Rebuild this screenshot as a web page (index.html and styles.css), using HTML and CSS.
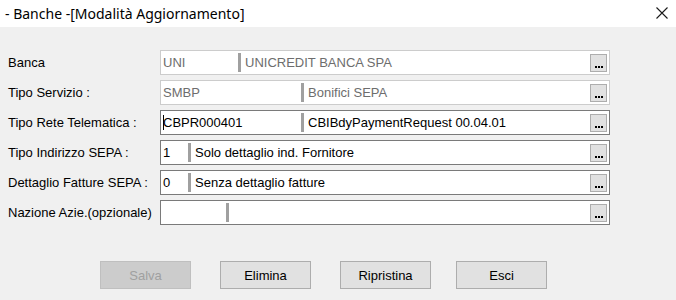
FILE: index.html
```html
<!DOCTYPE html>
<html lang="it">
<head>
    <meta charset="UTF-8">
    <title>Banche</title>
    <link rel="stylesheet" href="styles.css">
</head>
<body>
    <div class="titlebar">
        <span class="title">- Banche -[Modalità Aggiornamento]</span>
        <svg class="close" width="12" height="12" viewBox="0 0 12 12">
            <path d="M0.5 0.5 L11.5 11.5 M11.5 0.5 L0.5 11.5" stroke="#1a1a1a" stroke-width="1.1" fill="none"/>
        </svg>
    </div>

    <div class="form">
        <div class="row">
            <label>Banca</label>
            <div class="field disabled">
                <span class="code w-mid">UNI</span>
                <span class="sep"></span>
                <span class="desc">UNICREDIT BANCA SPA</span>
                <span class="dots"><i></i><i></i><i></i></span>
            </div>
        </div>
        <div class="row">
            <label>Tipo Servizio :</label>
            <div class="field disabled">
                <span class="code w-long">SMBP</span>
                <span class="sep"></span>
                <span class="desc">Bonifici SEPA</span>
                <span class="dots"><i></i><i></i><i></i></span>
            </div>
        </div>
        <div class="row">
            <label>Tipo Rete Telematica :</label>
            <div class="field">
                <span class="code w-long"><span class="caret"></span>CBPR000401</span>
                <span class="sep"></span>
                <span class="desc">CBIBdyPaymentRequest 00.04.01</span>
                <span class="dots"><i></i><i></i><i></i></span>
            </div>
        </div>
        <div class="row">
            <label>Tipo Indirizzo SEPA :</label>
            <div class="field">
                <span class="code w-short">1</span>
                <span class="sep"></span>
                <span class="desc">Solo dettaglio ind. Fornitore</span>
                <span class="dots"><i></i><i></i><i></i></span>
            </div>
        </div>
        <div class="row">
            <label>Dettaglio Fatture SEPA :</label>
            <div class="field">
                <span class="code w-short">0</span>
                <span class="sep"></span>
                <span class="desc">Senza dettaglio fatture</span>
                <span class="dots"><i></i><i></i><i></i></span>
            </div>
        </div>
        <div class="row">
            <label>Nazione Azie.(opzionale)</label>
            <div class="field">
                <span class="code w-nat"></span>
                <span class="sep"></span>
                <span class="desc"></span>
                <span class="dots"><i></i><i></i><i></i></span>
            </div>
        </div>
    </div>

    <div class="buttons">
        <button class="btn" disabled>Salva</button>
        <button class="btn">Elimina</button>
        <button class="btn">Ripristina</button>
        <button class="btn btn-last">Esci</button>
    </div>
</body>
</html>
```

FILE: styles.css
```css
body {
    margin: 0;
    padding: 0;
    background-color: #f0f0f0;
    font-family: "Liberation Sans", Arial, sans-serif;
    font-size: 13px;
    color: #000;
}
.titlebar {
    height: 27px;
    background: #fff;
    display: flex;
    align-items: center;
    justify-content: space-between;
    padding: 0 8px 0 5px;
}
.title {
    font-family: "Noto Sans", sans-serif;
    font-size: 14px;
    color: #000;
}
.close {
    margin-top: -1px;
}
.form {
    padding: 23px 0 0 8px;
    display: flex;
    flex-direction: column;
    gap: 5px;
}
.row {
    display: flex;
    align-items: center;
    height: 25px;
}
.row label {
    width: 152px;
    flex: none;
}
.field {
    width: 450px;
    height: 25px;
    box-sizing: border-box;
    border: 1px solid #7a7a7a;
    background: #fff;
    display: flex;
    align-items: center;
}
.field.disabled {
    border-color: #cccccc;
    color: #6d6d6d;
}
.code {
    flex: none;
    padding-left: 2px;
    box-sizing: border-box;
    display: flex;
    align-items: center;
}
.w-short { width: 27px; }
.w-mid { width: 77px; }
.w-long { width: 140px; }
.w-nat { width: 65px; }
.caret {
    width: 1px;
    height: 15px;
    background: #000;
    margin-right: -1px;
}
.sep {
    flex: none;
    width: 3px;
    height: 19px;
    background: #a0a0a0;
}
.desc {
    flex: 1;
    padding-left: 4px;
    white-space: nowrap;
}
.dots {
    flex: none;
    width: 17px;
    height: 18px;
    box-sizing: border-box;
    margin-right: 2px;
    border: 1px solid #adadad;
    background: #e1e1e1;
    display: flex;
    justify-content: center;
    align-items: flex-end;
    gap: 1px;
    padding-bottom: 3px;
}
.dots i {
    width: 2px;
    height: 2px;
    background: #000;
}
.buttons {
    display: flex;
    gap: 29px;
    padding: 36px 0 0 100px;
}
.btn {
    width: 91px;
    height: 28px;
    margin: 0;
    padding: 0;
    border: 1px solid #adadad;
    background: #e1e1e1;
    font-family: "Liberation Sans", Arial, sans-serif;
    font-size: 13px;
    color: #000;
}
.btn:disabled {
    border-color: #bfbfbf;
    background: #cccccc;
    color: #a0a0a0;
}
.btn-last {
    margin-left: -4px;
}
```
